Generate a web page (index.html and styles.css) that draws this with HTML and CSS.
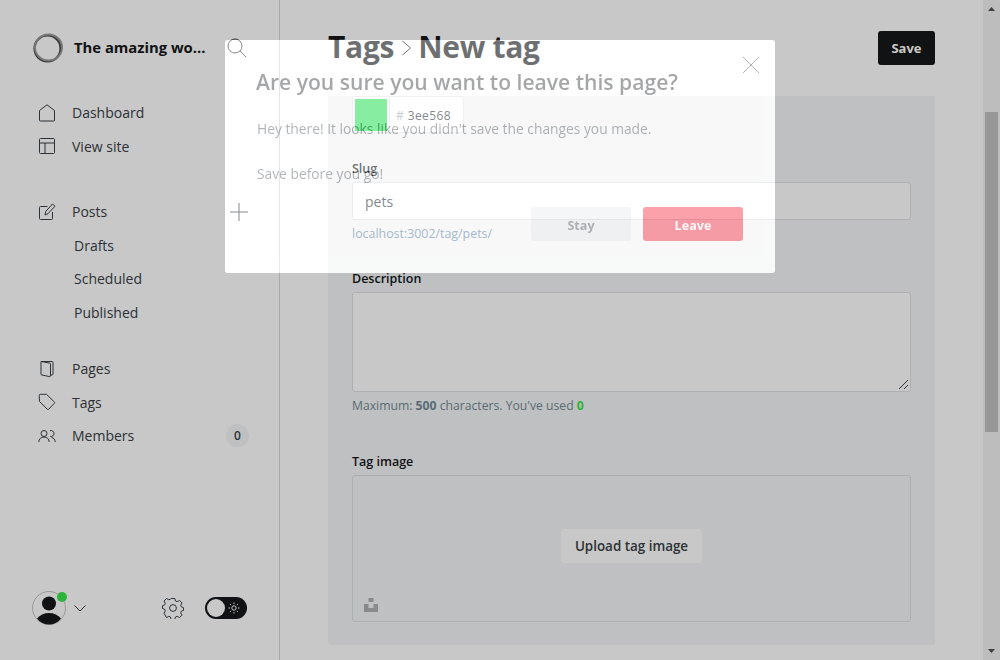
FILE: index.html
```html
<!DOCTYPE html>
<html lang="en">
<head>
    <meta charset="UTF-8">
    <meta name="viewport" content="width=device-width, initial-scale=1.0">
    <title>Tags - New tag</title>
    <link rel="stylesheet" href="styles.css">
</head>
<body>
    <div class="app">
        <aside class="sidebar">
            <div class="brand">
                <svg class="logo" width="32" height="32" viewBox="0 0 32 32"><circle cx="15.500" cy="16.500" r="13" fill="none" stroke="#4a4a4a" stroke-width="2.200"/><ellipse cx="16.500" cy="15.500" rx="13.500" ry="13" fill="none" stroke="#999" stroke-width="2"/></svg>
                <span class="brand-name">The amazing wo...</span>
                <svg class="icon search-icon" width="20" height="20" viewBox="0 0 20 20"><circle cx="8" cy="8" r="7"/><path d="M13 13l6 6"/></svg>
            </div>
            <nav class="nav">
                <a class="nav-item"><svg class="icon" width="18" height="18" viewBox="0 0 18 18"><path d="M1.500 6.500 9 .8l7.500 5.700v9.700a.8.8 0 0 1-.8.8H2.300a.8.8 0 0 1-.8-.8z"/></svg>Dashboard</a>
                <a class="nav-item"><svg class="icon" width="18" height="18" viewBox="0 0 18 18"><rect x="1.500" y="1.500" width="15" height="15" rx="1"/><path d="M1.500 6h15M7 6v10.500"/></svg>View site</a>
            </nav>
            <nav class="nav">
                <a class="nav-item"><svg class="icon" width="18" height="18" viewBox="0 0 18 18"><path d="M9.500 3.500h-7a1 1 0 0 0-1 1v11a1 1 0 0 0 1 1h11a1 1 0 0 0 1-1V9M7 12l.7-3.500L14.500 1l2.500 2.200-7 7.500z"/></svg>Posts</a>
                <a class="nav-item sub">Drafts</a>
                <a class="nav-item sub">Scheduled</a>
                <a class="nav-item sub">Published</a>
                <svg class="icon plus-icon" width="18" height="18" viewBox="0 0 18 18"><path d="M9 0v18M0 9h18"/></svg>
            </nav>
            <nav class="nav nav-last">
                <a class="nav-item"><svg class="icon" width="18" height="18" viewBox="0 0 18 18"><path d="M3 1.500h11a1 1 0 0 1 1 1v11.500a1 1 0 0 1-1 1h-1.500M3 1.500l8.800 1.600a1 1 0 0 1 .7 1V16a.8.8 0 0 1-1 .6L4 15a1 1 0 0 1-1-1z"/></svg>Pages</a>
                <a class="nav-item"><svg class="icon" width="18" height="18" viewBox="0 0 18 18"><path d="M1.200 2.500a1.200 1.200 0 0 1 1.300-1.200h6l7.800 7.600a1 1 0 0 1 0 1.400l-5.600 5.900a1 1 0 0 1-1.400 0L1.500 8.500z"/></svg>Tags</a>
                <a class="nav-item"><svg class="icon" width="18" height="18" viewBox="0 0 18 18"><circle cx="6" cy="6.500" r="3"/><path d="M.8 15c0-3 2.200-5 5.200-5s5.200 2 5.200 5M12 3.700a3 3 0 1 1 .2 5.700M13.500 10.400c2.200.5 3.700 2.300 3.700 4.600"/></svg>Members<span class="count">0</span></a>
            </nav>
            <div class="user-bar">
                <div class="avatar">
                    <svg width="34" height="34" viewBox="0 0 34 34"><circle cx="17" cy="17" r="16.500" fill="none" stroke="#c4c4c4"/><circle cx="17" cy="12.500" r="7" fill="#15171a"/><path d="M5 27.500c3-3.500 7-5.500 12-5.500s9 2 12 5.500c-3 4-7.500 6-12 6s-9-2-12-6z" fill="#15171a"/></svg>
                    <span class="online"></span>
                </div>
                <svg class="icon chevron" width="12" height="7" viewBox="0 0 12 7"><path d="M.5.5 6 6l5.500-5.500"/></svg>
                <svg class="icon gear" width="22" height="22" viewBox="0 0 22 22"><circle cx="11" cy="11" r="3.400"/><path d="M9.200 1.500h3.600l.7 2.500 1.700.7 2.300-1.300 2.500 2.500-1.300 2.300.7 1.700 2.100.7v2.800l-2.100.7-.7 1.700 1.300 2.300-2.500 2.500-2.300-1.300-1.700.7-.7 2.500H9.200l-.7-2.500-1.700-.7-2.300 1.300L2 16.200l1.300-2.300-.7-1.700-2.100-.7V8.700l2.100-.7.7-1.700L2 4l2.500-2.500 2.300 1.300 1.700-.7z"/></svg>
                <div class="toggle">
                    <span class="knob"></span>
                    <svg class="sun" width="12" height="12" viewBox="0 0 12 12"><circle cx="6" cy="6" r="2.200"/><path d="M6 .5v1.500M6 10v1.500M.5 6H2M10 6h1.500M2.100 2.100l1 1M8.900 8.900l1 1M2.100 9.900l1-1M8.900 3.100l1-1"/></svg>
                </div>
            </div>
        </aside>

        <main class="main">
            <header class="topbar">
                <h1 class="title">Tags<svg class="crumb" width="12" height="20" viewBox="0 0 12 20"><path d="M1.500 3 9.500 10l-8 7"/></svg>New tag</h1>
                <button class="save-btn">Save</button>
            </header>
            <section class="panel">
                <div class="color-box">
                    <span class="swatch"></span>
                    <span class="hex"><i>#</i> 3ee568</span>
                </div>
                <div class="field slug">
                    <label>Slug</label>
                    <div class="input">pets</div>
                    <p class="hint url">localhost:3002/tag/pets/</p>
                </div>
                <div class="field desc">
                    <label>Description</label>
                    <div class="input area">
                        <svg class="grip" width="11" height="11" viewBox="0 0 11 11"><path d="M1 10 10 1M6 10l4-4"/></svg>
                    </div>
                    <p class="hint">Maximum: <b>500</b> characters. You've used <b class="used">0</b></p>
                </div>
                <div class="field image">
                    <label>Tag image</label>
                    <div class="upload">
                        <span class="upload-btn">Upload tag image</span>
                        <svg class="unsplash" width="14" height="14" viewBox="0 0 14 14"><path d="M4.500 0h5v4h-5zM0 6h4.500v4h5V6H14v8H0z"/></svg>
                    </div>
                </div>
            </section>
        </main>

        <div class="scrollbar">
            <svg class="arrow arrow-up" width="7" height="4" viewBox="0 0 7 4"><path d="M0 4h7L3.500 0z"/></svg>
            <span class="thumb"></span>
            <svg class="arrow arrow-down" width="7" height="4" viewBox="0 0 7 4"><path d="M0 0h7L3.500 4z"/></svg>
        </div>
    </div>

    <div class="modal-hole">
        <div class="modal">
            <svg class="close" width="16" height="16" viewBox="0 0 16 16"><path d="M0 0l16 16M16 0 0 16"/></svg>
            <h2>Are you sure you want to leave this page?</h2>
            <p>Hey there! It looks like you didn't save the changes you made.</p>
            <p>Save before you go!</p>
            <div class="modal-actions">
                <button class="btn-stay">Stay</button>
                <button class="btn-leave">Leave</button>
            </div>
        </div>
    </div>
</body>
</html>
```

FILE: styles.css
```css
html, body {
    margin: 0;
    padding: 0;
    height: 100%;
    overflow: hidden;
}

body {
    font-family: "Open Sans", "Noto Sans", sans-serif;
    color: #15171a;
    background: #fff;
}

.app {
    display: flex;
    height: 660px;
}

.icon {
    fill: none;
    stroke: #394047;
    stroke-width: 1;
    flex-shrink: 0;
}

/* sidebar */
.sidebar {
    width: 215px;
    border-right: 1px solid #d8d8d8;
    padding: 32px 32px 0 32px;
    display: flex;
    flex-direction: column;
    position: relative;
}

.brand {
    display: flex;
    align-items: center;
    height: 32px;
}

.logo {
    margin-right: 10px;
    filter: blur(0.6px);
}

.brand-name {
    font-size: 14.8px;
    font-weight: 700;
    white-space: nowrap;
    margin-top: -2px;
}

.search-icon {
    margin-left: auto;
    margin-right: 0;
}

.nav {
    margin: 0 0 0 6px;
    position: relative;
}

.brand + .nav {
    margin-top: 32px;
}

.nav + .nav {
    margin-top: 32px;
}

.nav + .nav-last {
    margin-top: 23px;
}

.nav-item {
    display: flex;
    align-items: center;
    height: 33.5px;
    font-size: 14px;
    color: #394047;
}

.nav-item .icon {
    margin-right: 16px;
}

.nav-item.sub {
    padding-left: 36px;
}

.plus-icon {
    position: absolute;
    top: 8px;
    right: -1px;
}

.count {
    margin-left: auto;
    margin-right: -2px;
    width: 23px;
    height: 23px;
    border-radius: 50%;
    background: #f4f5f6;
    font-size: 12px;
    display: flex;
    align-items: center;
    justify-content: center;
    font-weight: 600;
}

.user-bar {
    margin-top: auto;
    margin-bottom: 35px;
    display: flex;
    align-items: center;
}

.avatar {
    position: relative;
    width: 34px;
    height: 34px;
}

.online {
    position: absolute;
    top: 1px;
    right: -1px;
    width: 10px;
    height: 10px;
    border-radius: 50%;
    background: #38e64c;
}

.chevron {
    margin-left: 8px;
}

.gear {
    margin-left: auto;
    margin-right: 21px;
}

.toggle {
    width: 42px;
    height: 22px;
    border-radius: 11px;
    background: #15171a;
    position: relative;
    flex-shrink: 0;
}

.knob {
    position: absolute;
    top: 2px;
    left: 2px;
    width: 18px;
    height: 18px;
    border-radius: 50%;
    background: #fff;
}

.sun {
    position: absolute;
    top: 5px;
    right: 7px;
    fill: none;
    stroke: #fff;
    stroke-width: 1;
}

/* main */
.main {
    flex: 1;
    padding: 0 48px;
    display: flex;
    flex-direction: column;
}

.topbar {
    display: flex;
    align-items: center;
    justify-content: space-between;
    height: 96px;
    flex-shrink: 0;
}

.title {
    margin: -3px 0 0;
    font-size: 30px;
    font-weight: 700;
    letter-spacing: -0.3px;
}

.crumb {
    fill: none;
    stroke: #15171a;
    stroke-width: 1;
    margin: 0 5px 0 7px;
}

.save-btn {
    width: 57px;
    height: 34px;
    background: #15171a;
    color: #fff;
    border: none;
    border-radius: 3px;
    font: 700 13px "Open Sans", sans-serif;
}

.panel {
    background: #f4f5f6;
    border-radius: 0 0 3px 3px;
    padding: 0 24px;
    height: 549px;
}

.color-box {
    display: flex;
    align-items: flex-start;
    box-sizing: border-box;
    width: 112px;
    height: 37px;
    border: 1px solid #e6e8ea;
    background: #fff;
    border-radius: 3px;
}

.swatch {
    width: 32px;
    height: 32px;
    margin: 2px 0 0 2px;
    background: #3ee568;
}

.hex {
    margin-left: 2px;
    padding-left: 6px;
    height: 35px;
    line-height: 37px;
    border-left: 1px solid #e6e8ea;
    font-size: 12px;
    letter-spacing: 0.4px;
    color: #394047;
}

.hex i {
    font-style: normal;
    color: #abb4be;
}

.field label {
    display: block;
    font-size: 12.5px;
    line-height: 17px;
    font-weight: 600;
    margin-bottom: 5px;
}

.slug {
    margin-top: 27px;
}

.input {
    height: 36px;
    border: 1px solid #dde1e5;
    background: #fff;
    border-radius: 3px;
    padding: 0 12px;
    font-size: 14px;
    line-height: 37px;
    color: #394047;
    position: relative;
}

.area {
    height: 98px;
}

.grip {
    position: absolute;
    right: 1px;
    bottom: 1px;
    stroke: #444;
    fill: none;
}

.hint {
    margin: 5px 0 0;
    font-size: 12.2px;
    line-height: 18px;
    color: #738a94;
}

.hint.url {
    font-size: 12.4px;
    color: #6f8bab;
}

.hint b {
    font-weight: 700;
}

.hint .used {
    color: #38e64c;
}

.desc {
    margin-top: 27px;
}

.image {
    margin-top: 38px;
}

.upload {
    height: 145px;
    border: 1px solid #dde1e5;
    border-radius: 3px;
    display: flex;
    align-items: center;
    justify-content: center;
    position: relative;
}

.upload-btn {
    background: #fff;
    border-radius: 3px;
    padding: 0 14px;
    height: 34px;
    line-height: 34px;
    font-size: 13.4px;
    font-weight: 600;
    color: #394047;
    margin-bottom: 5px;
}

.unsplash {
    position: absolute;
    left: 11px;
    bottom: 9px;
    fill: #b0b0b0;
}

/* scrollbar drawn by hand, the window does not scroll */
.scrollbar {
    width: 17px;
    background: #f1f1f1;
    position: relative;
    flex-shrink: 0;
}

.thumb {
    position: absolute;
    top: 112px;
    left: 2px;
    width: 13px;
    height: 320px;
    background: #c1c1c1;
}

.arrow {
    position: absolute;
    left: 5px;
    fill: #505050;
}

.arrow-up {
    top: 7px;
}

.arrow-down {
    bottom: 7px;
}

/* modal: the shadow is the backdrop, it leaves the box itself undimmed */
.modal-hole {
    position: absolute;
    top: 40px;
    left: 225px;
    width: 550px;
    height: 233px;
    border-radius: 3px;
    box-shadow: 0 0 0 1200px rgba(0, 0, 0, 0.215);
}

.modal {
    box-sizing: border-box;
    height: 100%;
    padding: 27px 32px;
    background: #fff;
    border-radius: 3px;
    opacity: 0.38;
    position: relative;
}

.close {
    position: absolute;
    top: 17px;
    right: 16px;
    stroke: #394047;
    fill: none;
}

.modal h2 {
    margin: 0 0 23px -1px;
    font-size: 21.1px;
    font-weight: 600;
    color: #15171a;
}

.modal p {
    margin: 0 0 26px;
    font-size: 13.8px;
    color: #394047;
}

.modal-actions {
    position: absolute;
    right: 32px;
    bottom: 32px;
    display: flex;
    gap: 12px;
}

.modal-actions button {
    width: 100px;
    height: 34px;
    border: none;
    border-radius: 3px;
    padding: 2px 0 0;
    font: 700 12.6px "Open Sans", sans-serif;
}

.btn-stay {
    background: #e6e9eb;
    color: #394047;
}

.btn-leave {
    background: #f50b23;
    color: #fff;
}
```
